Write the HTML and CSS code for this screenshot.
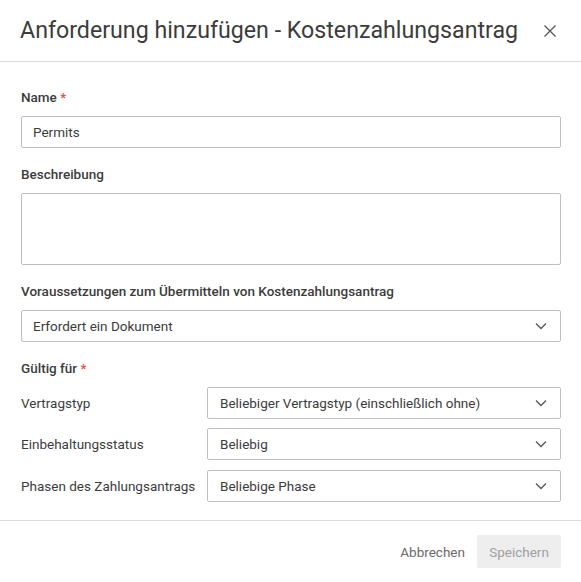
FILE: index.html
```html
<!DOCTYPE html>
<html lang="de">
<head>
<meta charset="utf-8">
<title>Anforderung hinzufügen</title>
<link rel="stylesheet" href="styles.css">
</head>
<body>
<div class="dialog">
  <header class="dlg-header">
    <h1 class="dlg-title">Anforderung hinzufügen - Kostenzahlungsantrag</h1>
    <button class="close" aria-label="Schließen">
      <svg width="14" height="14" viewBox="0 0 14 14"><path d="M1.5 1.5 L12.5 12.5 M12.5 1.5 L1.5 12.5" stroke="#555" stroke-width="1.3" fill="none"/></svg>
    </button>
  </header>
  <main class="dlg-body">
    <div class="field">
      <label class="label">Name <span class="req">*</span></label>
      <div class="input">Permits</div>
    </div>
    <div class="field">
      <label class="label">Beschreibung</label>
      <div class="textarea"></div>
    </div>
    <div class="field">
      <label class="label">Voraussetzungen zum Übermitteln von Kostenzahlungsantrag</label>
      <div class="select"><span>Erfordert ein Dokument</span><svg class="chev" width="12" height="8" viewBox="0 0 12 8"><path d="M1 1.5 L6 6.5 L11 1.5" stroke="#555" stroke-width="1.3" fill="none"/></svg></div>
    </div>
    <div class="field last">
      <label class="label">Gültig für <span class="req">*</span></label>
      <div class="rows">
        <div class="row">
          <span class="row-label">Vertragstyp</span>
          <div class="select"><span>Beliebiger Vertragstyp (einschließlich ohne)</span><svg class="chev" width="12" height="8" viewBox="0 0 12 8"><path d="M1 1.5 L6 6.5 L11 1.5" stroke="#555" stroke-width="1.3" fill="none"/></svg></div>
        </div>
        <div class="row">
          <span class="row-label">Einbehaltungsstatus</span>
          <div class="select"><span>Beliebig</span><svg class="chev" width="12" height="8" viewBox="0 0 12 8"><path d="M1 1.5 L6 6.5 L11 1.5" stroke="#555" stroke-width="1.3" fill="none"/></svg></div>
        </div>
        <div class="row">
          <span class="row-label">Phasen des Zahlungsantrags</span>
          <div class="select"><span>Beliebige Phase</span><svg class="chev" width="12" height="8" viewBox="0 0 12 8"><path d="M1 1.5 L6 6.5 L11 1.5" stroke="#555" stroke-width="1.3" fill="none"/></svg></div>
        </div>
      </div>
    </div>
  </main>
  <footer class="dlg-footer">
    <button class="btn-link">Abbrechen</button>
    <button class="btn-save" disabled>Speichern</button>
  </footer>
</div>
</body>
</html>
```
FILE: styles.css
```css
* { box-sizing: border-box; }
html, body { margin: 0; padding: 0; background: #fff; }
body {
  font-family: Roboto, "Noto Sans", "Liberation Sans", sans-serif;
  color: #3c3c3c;
  font-size: 13.5px;
}
.dialog { width: 581px; height: 582px; display: flex; flex-direction: column; }
.dlg-header {
  height: 62px;
  border-bottom: 1px solid #dcdcdc;
  display: flex;
  align-items: center;
  justify-content: space-between;
  padding: 0 24px 0 20px;
}
.dlg-title {
  margin: 0;
  font-size: 23.2px;
  font-weight: 400;
  color: #3c3c3c;
  line-height: 1;
  padding-top: 1px;
}
.close {
  border: 0; background: none; padding: 0; width: 14px; height: 14px;
  display: flex; align-items: center; justify-content: center; cursor: pointer;
}
.dlg-body { padding: 25px 20px 18px 21px; }
.field { margin-bottom: 16px; }
.field.last { margin-bottom: 0; }
.label {
  display: block;
  height: 20px;
  line-height: 20px;
  font-weight: 500;
  color: #3c3c3c;
  margin-bottom: 9px;
}
.req { color: #ec4a41; }
.input, .select, .textarea {
  border: 1px solid #bfbfbf;
  border-radius: 2px;
  background: #fff;
}
.input {
  height: 32px;
  display: flex;
  align-items: center;
  padding: 0 11px;
  color: #3c3c3c;
}
.textarea { height: 72px; }
.select {
  height: 32px;
  display: flex;
  align-items: center;
  justify-content: space-between;
  padding: 0 13px 0 11px;
  color: #3c3c3c;
}
.chev { flex: none; }
.rows { display: flex; flex-direction: column; gap: 9px; }
.row { display: flex; align-items: center; }
.row + .row + .row { margin-top: 1px; }
.row-label { width: 186px; flex: none; color: #3c3c3c; }
.row .select { flex: 1; padding-left: 12px; }
.dlg-footer {
  flex: 1;
  border-top: 1px solid #dcdcdc;
  display: flex;
  align-items: center;
  justify-content: flex-end;
  padding: 0 20px 0 0;
  gap: 12px;
}
.btn-link {
  border: 0; background: none; padding: 0;
  font: inherit; color: #6a6a6a;
}
.btn-save {
  border: 0; background: #eeeeee; color: #a0a0a0;
  font: inherit;
  height: 33px; width: 84px; border-radius: 2px;
}
```
